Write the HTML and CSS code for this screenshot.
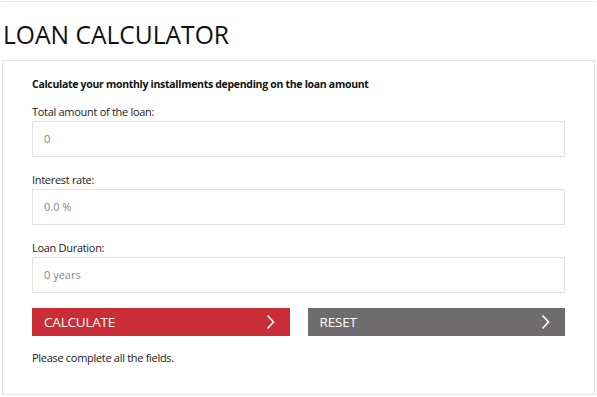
FILE: index.html
```html
<!DOCTYPE html>
<html>
<head>
<meta charset="utf-8">
<link rel="stylesheet" href="styles.css">
</head>
<body>
<div class="topline"></div>
<h1 class="title">LOAN CALCULATOR</h1>
<div class="card">
  <p class="intro">Calculate your monthly installments depending on the loan amount</p>
  <div class="field">
    <label class="label">Total amount of the loan:</label>
    <div class="input">0</div>
  </div>
  <div class="field">
    <label class="label">Interest rate:</label>
    <div class="input">0.0 %</div>
  </div>
  <div class="field">
    <label class="label">Loan Duration:</label>
    <div class="input">0 years</div>
  </div>
  <div class="buttons">
    <div class="btn btn-red"><span>CALCULATE</span>
      <svg class="chev" width="9" height="16" viewBox="0 0 9 16"><polyline points="1.5,1.5 7.5,8 1.5,14.5" fill="none" stroke="#fff" stroke-width="1.6"/></svg>
    </div>
    <div class="btn btn-gray"><span>RESET</span>
      <svg class="chev" width="9" height="16" viewBox="0 0 9 16"><polyline points="1.5,1.5 7.5,8 1.5,14.5" fill="none" stroke="#fff" stroke-width="1.6"/></svg>
    </div>
  </div>
  <p class="msg">Please complete all the fields.</p>
</div>
</body>
</html>
```
FILE: styles.css
```css
* { box-sizing: border-box; }
body {
  margin: 0;
  width: 597px;
  font-family: "Open Sans", "Noto Sans", sans-serif;
  color: #222;
  background: #fff;
}
.topline {
  margin: 1px 2px 0 2px;
  height: 1px;
  background: #e6e6e6;
}
.title {
  margin: 0;
  padding: 16px 0 0 3px;
  height: 58px;
  font-size: 24.6px;
  font-weight: 400;
  line-height: 34px;
  color: #111;
}
.card {
  margin: 0 2px 0 2px;
  height: 335px;
  border: 1px solid #e6e6e6;
  padding: 15px 29px 0 29px;
}
.intro {
  margin: 0;
  font-size: 10.5px;
  font-weight: 700;
  letter-spacing: -0.3px;
  line-height: 16px;
  color: #111;
}
.field {
  display: flex;
  flex-direction: column;
}
.field:first-of-type { margin-top: 12px; }
.label {
  font-size: 11px;
  letter-spacing: -0.3px;
  line-height: 16px;
  height: 16px;
}
.input {
  margin-top: 1px;
  height: 36px;
  border: 1px solid #e3e3e3;
  padding-left: 11px;
  font-size: 11px;
  line-height: 34px;
  color: #888;
}
.field + .field { margin-top: 15px; }
.buttons {
  margin-top: 15px;
  display: flex;
  gap: 18px;
}
.btn {
  flex: 1;
  height: 28px;
  display: flex;
  align-items: center;
  justify-content: space-between;
  padding: 0 15px 0 12px;
  color: #fff;
  font-size: 13.5px;
  letter-spacing: -0.2px;
}
.btn-red { background: #cb2d37; }
.btn-gray { background: #6e6c6c; }
.msg {
  margin: 15px 0 0 0;
  font-size: 11px;
  letter-spacing: -0.3px;
  line-height: 14px;
}
```
